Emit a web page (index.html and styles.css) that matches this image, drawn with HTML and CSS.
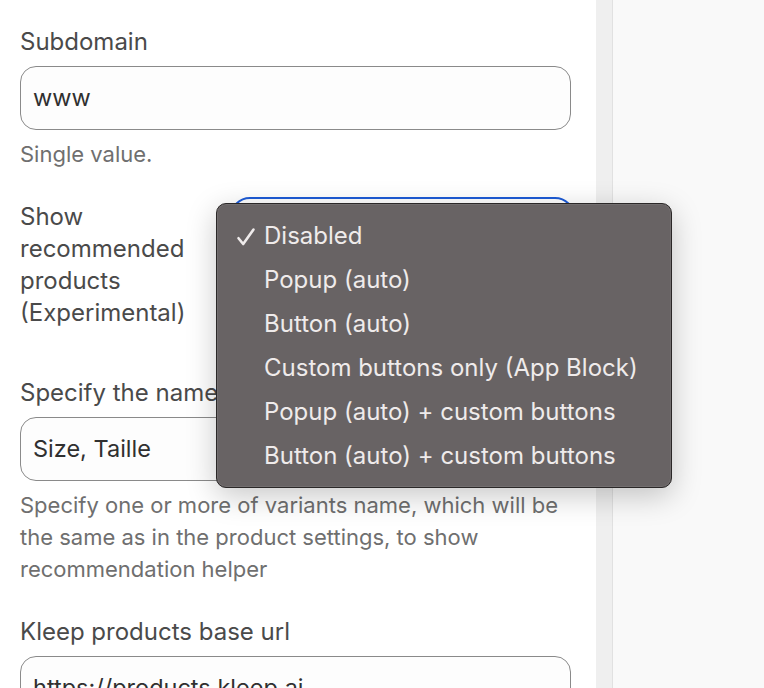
FILE: index.html
```html
<!DOCTYPE html>
<html lang="en">
<head>
<meta charset="utf-8">
<title>Settings</title>
<link rel="stylesheet" href="styles.css">
</head>
<body>
<div class="layout">
  <div class="panel">
    <div class="field">
      <div class="label">Subdomain</div>
      <div class="input">www</div>
      <div class="help">Single value.</div>
    </div>
    <div class="field row">
      <div class="label side">Show recommended products (Experimental)</div>
      <div class="select"></div>
      <div class="menu">
        <div class="item"><svg class="check" width="20" height="20" viewBox="0 0 20 20"><path d="M2.5 11.2 L7.2 17 L17.5 2.5" fill="none" stroke="#efebeb" stroke-width="2.6" stroke-linecap="round" stroke-linejoin="round"/></svg>Disabled</div>
        <div class="item">Popup (auto)</div>
        <div class="item">Button (auto)</div>
        <div class="item">Custom buttons only (App Block)</div>
        <div class="item">Popup (auto) + custom buttons</div>
        <div class="item">Button (auto) + custom buttons</div>
      </div>
    </div>
    <div class="field">
      <div class="label">Specify the name of the variant</div>
      <div class="input">Size, Taille</div>
      <div class="help">Specify one or more of variants name, which will be the same as in the product settings, to show recommendation helper</div>
    </div>
    <div class="field">
      <div class="label">Kleep products base url</div>
      <div class="input">https://products.kleep.ai</div>
    </div>
  </div>
  <div class="scrollbar"></div>
  <div class="aside"></div>
</div>
</body>
</html>
```
FILE: styles.css
```css
html, body {
  margin: 0;
  padding: 0;
  background: #f9f9f9;
}
body {
  font-family: Inter, "Noto Sans", sans-serif;
  font-size: 22px;
  line-height: 32px;
  color: #4a4a4a;
}
.layout {
  display: flex;
  height: 688px;
  overflow: hidden;
}
.panel {
  width: 596px;
  flex: none;
  background: #ffffff;
  padding: 26px 25px 0 20px;
  box-sizing: border-box;
  display: flex;
  flex-direction: column;
  gap: 31px;
}
.scrollbar {
  width: 17px;
  flex: none;
  background: #efefef;
  border-right: 1px solid #e1e1e1;
  box-sizing: border-box;
}
.aside {
  flex: 1;
  background: #f9f9f9;
}
.field {
  display: flex;
  flex-direction: column;
}
.label {
  color: #4a4a4a;
  font-size: 24px;
  margin-bottom: 8px;
  white-space: nowrap;
  overflow: hidden;
}
.input {
  height: 64px;
  box-sizing: border-box;
  border: 1px solid #8a8a8a;
  border-radius: 16px;
  background: #fdfdfd;
  padding: 0 12px;
  display: flex;
  align-items: center;
  color: #303030;
  font-size: 23.5px;
}
.help {
  margin-top: 8px;
  color: #6f6f6f;
}
.row {
  flex-direction: row;
  position: relative;
  align-items: flex-start;
  margin-bottom: 17px;
}
.label.side {
  white-space: normal;
  width: 190px;
  margin: 0;
  flex: none;
}
.select {
  flex: 1;
  margin-left: 20px;
  margin-top: -4px;
  margin-right: -4px;
  height: 64px;
  border: 2px solid #1d5bd6;
  border-radius: 20px;
  background: #ffffff;
}
.menu {
  position: absolute;
  left: 196px;
  top: 2px;
  width: 456px;
  height: 285px;
  box-sizing: border-box;
  padding: 10px 0 11px;
  background: #686364;
  border: 1px solid #2b2828;
  border-radius: 10px;
  box-shadow: 0 8px 30px rgba(0, 0, 0, 0.22), inset 0 0 0 1px rgba(255, 255, 255, 0.08);
  color: #efebeb;
  font-family: Inter, "Noto Sans", sans-serif;
  font-size: 24px;
}
.item {
  height: 44px;
  display: flex;
  align-items: center;
  padding-left: 47px;
  position: relative;
}
.check {
  position: absolute;
  left: 19px;
  top: 13px;
}
```
